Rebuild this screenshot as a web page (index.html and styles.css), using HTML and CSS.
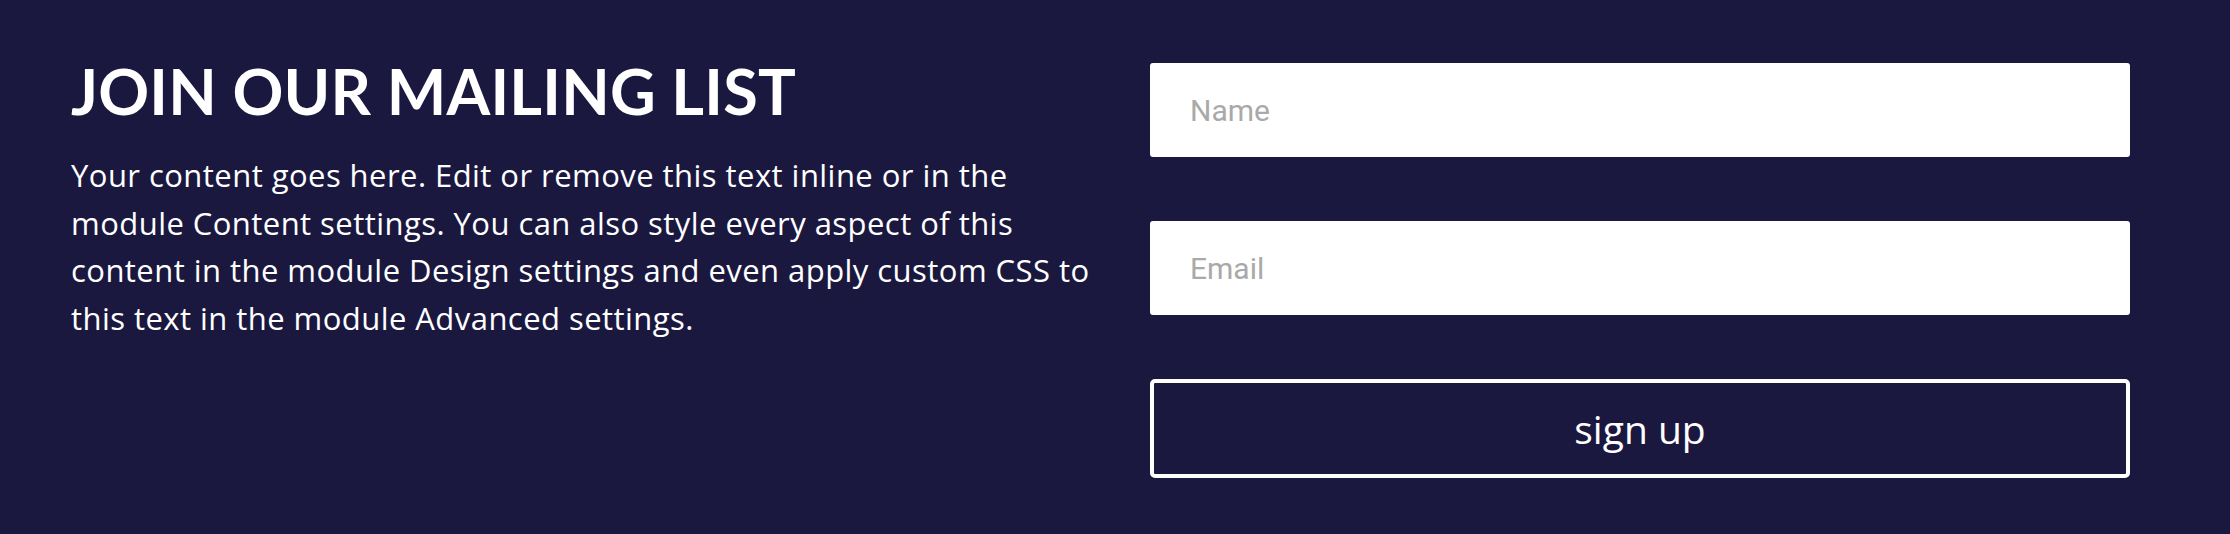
FILE: index.html
```html
<!DOCTYPE html>
<html lang="en">
<head>
  <meta charset="UTF-8" />
  <meta name="viewport" content="width=device-width, initial-scale=1" />
  <title>Join our mailing list</title>
  <link rel="stylesheet" href="styles.css">
</head>
<body>

  <section class="signup">
    <div class="signup-text">
      <h2>JOIN OUR MAILING LIST</h2>
      <p>Your content goes here. Edit or remove this text inline or in the module Content settings. You can also style every aspect of this content in the module Design settings and even apply custom CSS to this text in the module Advanced settings.</p>
    </div>

    <form class="signup-form" onsubmit="return false">
      <input type="text" placeholder="Name">
      <input type="email" placeholder="Email">
      <button type="submit">sign up</button>
    </form>
  </section>

</body>
</html>
```

FILE: styles.css
```css
:root {
  --bg-color: #1b1840;
  --text-color: #ffffff;
  --placeholder: #a9a9a9;
}

body {
  margin: 0;
  background: var(--bg-color);
  color: var(--text-color);
  font-family: 'Open Sans', sans-serif;
}

.signup {
  display: grid;
  grid-template-columns: 1029px 980px;
  column-gap: 50px;
  padding: 59px 100px 56px 71px;
}

.signup-text h2 {
  margin: 0;
  font-family: Lato, 'Open Sans', sans-serif;
  font-weight: 700;
  font-size: 63px;
  line-height: 64px;
  letter-spacing: 0.2px;
}

.signup-text p {
  margin: 29px 0 0;
  font-size: 31px;
  line-height: 47.6px;
  letter-spacing: 0.45px;
}

.signup-form {
  display: flex;
  flex-direction: column;
  gap: 64px;
  padding-top: 4px;
}

.signup-form input {
  height: 94px;
  box-sizing: border-box;
  border: none;
  border-radius: 3px;
  padding: 0 40px;
  background: #ffffff;
  font-family: Roboto, sans-serif;
  font-size: 30px;
  color: #333333;
  outline: none;
}

.signup-form input::placeholder {
  color: var(--placeholder);
}

.signup-form button {
  height: 99px;
  border: 4px solid #ffffff;
  border-radius: 5px;
  background: transparent;
  color: #ffffff;
  font-family: 'Open Sans', sans-serif;
  font-size: 39px;
  cursor: pointer;
}
```
